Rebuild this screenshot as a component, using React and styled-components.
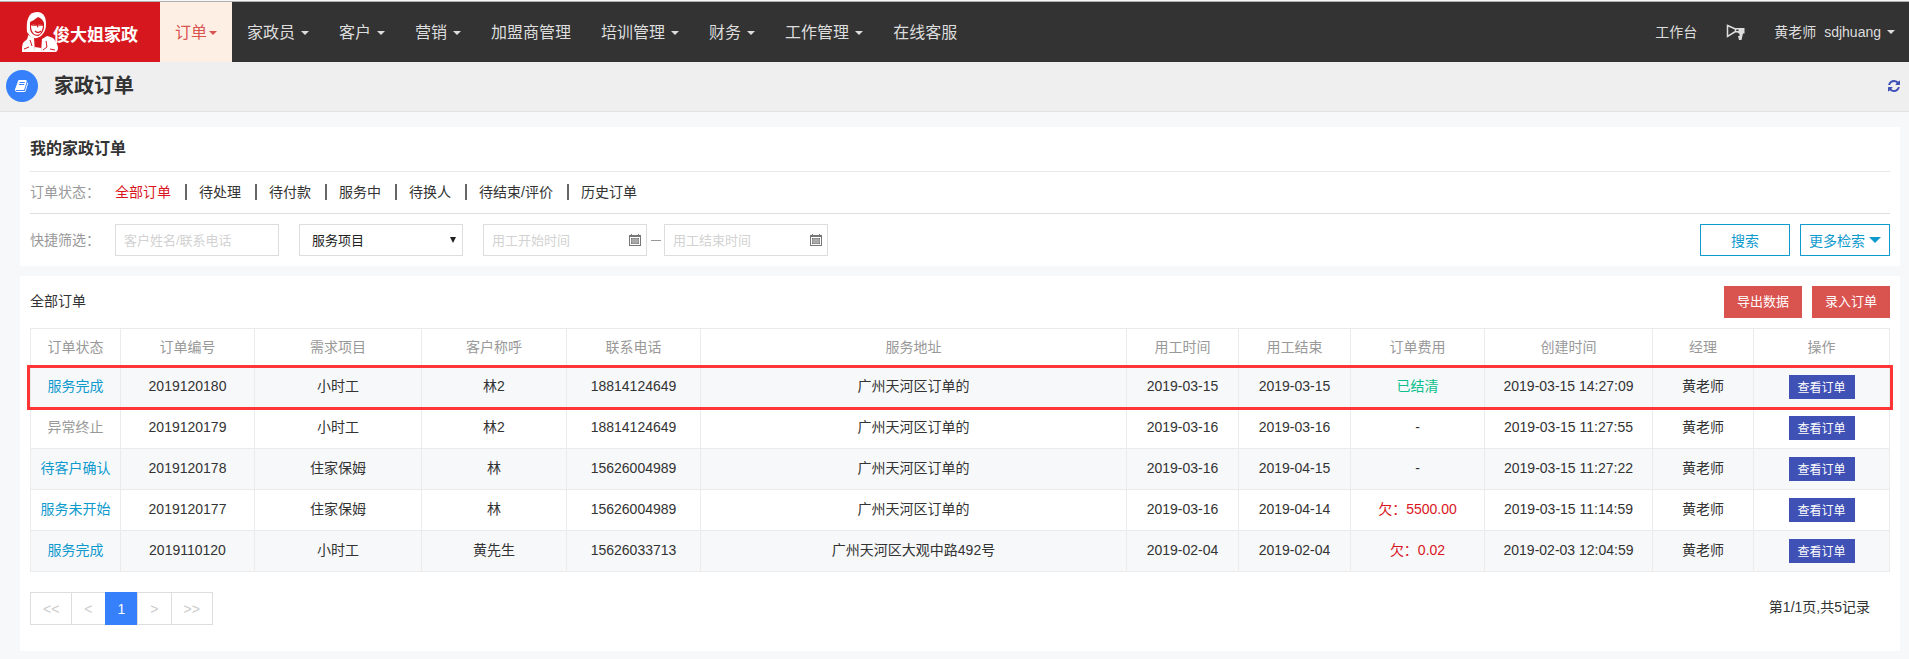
import React from "react"
import styled, { createGlobalStyle, css } from "styled-components"

const GlobalStyle = createGlobalStyle`
  * {
    box-sizing: border-box;
  }

  body {
    margin: 0;
    background: #f7f8fa;
    color: #333;
    font: 14px/20px "Liberation Sans", "Noto Sans CJK SC", sans-serif;
  }

  button, input, select {
    font-family: inherit;
  }

  a {
    color: inherit;
    text-decoration: none;
  }
`

const menu = [
  { label: "订单", caret: true, active: true },
  { label: "家政员", caret: true },
  { label: "客户", caret: true },
  { label: "营销", caret: true },
  { label: "加盟商管理" },
  { label: "培训管理", caret: true },
  { label: "财务", caret: true },
  { label: "工作管理", caret: true },
  { label: "在线客服" },
]

const statuses = ["全部订单", "待处理", "待付款", "服务中", "待换人", "待结束/评价", "历史订单"]

const columns = [
  { label: "订单状态", width: 90 },
  { label: "订单编号", width: 134 },
  { label: "需求项目", width: 167 },
  { label: "客户称呼", width: 145 },
  { label: "联系电话", width: 134 },
  { label: "服务地址" },
  { label: "用工时间", width: 112 },
  { label: "用工结束", width: 112 },
  { label: "订单费用", width: 134 },
  { label: "创建时间", width: 168 },
  { label: "经理", width: 101 },
  { label: "操作", width: 136 },
]

const orders = [
  { status: "服务完成", no: "2019120180", item: "小时工", name: "林2", phone: "18814124649", address: "广州天河区订单的", start: "2019-03-15", end: "2019-03-15", fee: "已结清", tone: "paid", created: "2019-03-15 14:27:09", marked: true },
  { status: "异常终止", no: "2019120179", item: "小时工", name: "林2", phone: "18814124649", address: "广州天河区订单的", start: "2019-03-16", end: "2019-03-16", fee: "-", created: "2019-03-15 11:27:55", closed: true },
  { status: "待客户确认", no: "2019120178", item: "住家保姆", name: "林", phone: "15626004989", address: "广州天河区订单的", start: "2019-03-16", end: "2019-04-15", fee: "-", created: "2019-03-15 11:27:22" },
  { status: "服务未开始", no: "2019120177", item: "住家保姆", name: "林", phone: "15626004989", address: "广州天河区订单的", start: "2019-03-16", end: "2019-04-14", fee: "欠：5500.00", tone: "owed", created: "2019-03-15 11:14:59" },
  { status: "服务完成", no: "2019110120", item: "小时工", name: "黄先生", phone: "15626033713", address: "广州天河区大观中路492号", start: "2019-02-04", end: "2019-02-04", fee: "欠：0.02", tone: "owed", created: "2019-02-03 12:04:59" },
]

const Portrait = () => (
  <svg width="37" height="40" viewBox="0 0 37 40" aria-hidden="true">
    <path fill="#fff" d="M5 20C4 9 6 0 15 0c7 0 9 6 9 12 0 4-1 8-4 11-4 4-9 4-12 1Z" />
    <path fill="#d6181e" d="M8 10c3-1 5-3 8-5 3 1 5 3 6 6v4c0 4-3 8-6 9-5 0-8-4-8-8Z" />
    <path fill="#fff" d="M9 14l2-2 3 1 2 3 1-4 4 1c0 3-1 6-3 9-2 1-4 1-6 0-2-2-3-5-3-8Z" />
    <path fill="none" stroke="#d6181e" strokeWidth="1.4" d="M10 13l4 0M17 13h4M13 19c2 2 4 2 6 0" />
    <path fill="#fff" d="M6 23l6 3 1 14H0c0-5 0-9 3-11 2-1 3-3 3-6ZM20 27l5-3c3 1 5 1 7 3 2 3 4 6 4 9 0 2-1 4-3 4H19Z" />
    <path fill="#fff" d="M13 35l6 1v4h-7Z" />
    <path fill="none" stroke="#d6181e" strokeWidth="1" d="M2 37l5-2M8 28l2 6M24 29l1 6-4 3M28 37l5 1" />
  </svg>
)

const BookIcon = () => (
  <svg width="14" height="14" viewBox="0 0 1792 1792" fill="#fff" aria-hidden="true">
    <path d="M1639 478q40 57 18 129l-275 906q-19 64-76.5 107.5t-122.5 43.5h-923q-77 0-148.5-53.5t-99.5-131.5q-24-67-2-127 0-4 3-27t4-37q1-8-3-21.5t-3-19.5q2-11 8-21t16.5-23.5 16.5-23.5q23-38 45-91.5t30-91.5q3-10 .5-30t-.5-28q3-11 17-28t17-23q21-36 42-92t25-90q1-9-2.500-32t.5-28q4-13 22-30.500t22-22.500q19-26 42.500-84.500t27.500-96.500q1-8-3-25.500t-2-26.500q2-8 9-18t18-23 17-21q8-12 16.500-30.500t15-35 16-36 19.500-32 26.500-23.500 36-11.500 47.500 5.500l-1 3q38-9 51-9h761q74 0 114 56t18 130l-274 906q-36 119-71.500 153.500t-128.500 34.500h-869q-27 0-38 15-11 16-1 43 24 70 144 70h923q29 0 56-15.500t35-41.500l300-987q7-22 5-57 38 15 59 43zm-1064 2q-4 13 2 22.500t20 9.500h608q13 0 25.500-9.500t16.500-22.500l21-64q4-13-2-22.500t-20-9.500h-608q-13 0-25.500 9.500t-16.500 22.500zm-83 256q-4 13 2 22.500t20 9.500h608q13 0 25.500-9.500t16.500-22.500l21-64q4-13-2-22.500t-20-9.500h-608q-13 0-25.500 9.500t-16.500 22.500z" />
  </svg>
)

const RefreshIcon = () => (
  <svg width="14" height="14" viewBox="0 0 1792 1792" fill="#3f51b5" aria-hidden="true">
    <path d="M1639 1056q0 5-1 7-64 268-268 434.5t-478 166.5q-146 0-282.5-55t-243.5-157l-129 129q-19 19-45 19t-45-19-19-45v-448q0-26 19-45t45-19h448q26 0 45 19t19 45-19 45l-137 137q71 66 161 102t187 36q134 0 250-65t186-179q11-17 53-117 8-23 30-23h192q13 0 22.5 9.5t9.5 22.5zm25-800v448q0 26-19 45t-45 19h-448q-26 0-45-19t-19-45 19-45l138-138q-148-137-349-137-134 0-250 65t-186 179q-11 17-53 117-8 23-30 23h-199q-13 0-22.5-9.5t-9.5-22.5v-7q65-268 270-434.5t480-166.5q146 0 284 55.5t245 156.5l130-129q19-19 45-19t45 19 19 45z" />
  </svg>
)

const HornIcon = () => (
  <svg width="19" height="20" viewBox="0 0 19 20" aria-hidden="true">
    <path fill="none" stroke="#ddd" strokeWidth="1.5" d="M1.500 3.500v11L9.500 9.500V7Z" />
    <path fill="#ddd" d="M9 6h9.500v5.500h-1.500l-1.500 6.500h-2.500l-1-4h1.500v-2l-2-1.500H9.500V9h3V7.500H9Z" />
  </svg>
)

const CalendarIcon = () => (
  <svg width="12" height="12" viewBox="0 0 12 12" aria-hidden="true">
    <path fill="#777" d="M0 1h2V0h1v1h6V0h1v1h2v11H0Z" />
    <path fill="#fff" d="M1 3h10v8H1Z" />
    <path fill="#777" d="M2 4h8v6H2Z" />
    <path stroke="#ddd" strokeWidth="0.6" d="M4 4v6M6 4v6M8 4v6M2 6h8M2 8h8" />
  </svg>
)

const App = () => {
  return (<>
            <GlobalStyle />
            <NavBar>
              <Logo href="#">
                <Portrait />
                <LogoText>俊大姐家政</LogoText>
              </Logo>
              {menu.map(({ label, caret, active }) => (
                <NavLink href="#" key={label} $active={active}>
                  {label}
                  {caret && <Caret $spaced={!active} />}
                </NavLink>
              ))}
              <UserNav>
                <UserLink href="#">工作台</UserLink>
                <UserLink href="#" aria-label="消息"><HornIcon /></UserLink>
                <UserLink href="#">
                  <UserName>黄老师</UserName>
                  sdjhuang
                  <Caret $spaced />
                </UserLink>
              </UserNav>
            </NavBar>

            <PageHeader>
              <RoundIcon><BookIcon /></RoundIcon>
              <PageTitle>家政订单</PageTitle>
              <RefreshButton type="button" aria-label="刷新"><RefreshIcon /></RefreshButton>
            </PageHeader>

            <Content>
              <Panel>
                <PanelTitle>我的家政订单</PanelTitle>
                <StatusRow>
                  <RowLabel>订单状态：</RowLabel>
                  <StatusList>
                    {statuses.map((s, i) => (
                      <StatusItem key={s}>
                        <StatusLink href="#" $active={i === 0}>{s}</StatusLink>
                      </StatusItem>
                    ))}
                  </StatusList>
                </StatusRow>
                <FilterRow>
                  <RowLabel>快捷筛选：</RowLabel>
                  <Field>
                    <TextInput aria-label="客户姓名/联系电话" placeholder="客户姓名/联系电话" />
                  </Field>
                  <Field>
                    <Select aria-label="服务项目" defaultValue="">
                      <option value="">服务项目</option>
                      <option>小时工</option>
                      <option>住家保姆</option>
                    </Select>
                    <SelectArrow />
                  </Field>
                  <DateRange>
                    <Field>
                      <TextInput aria-label="用工开始时间" placeholder="用工开始时间" />
                      <CalendarIcon />
                    </Field>
                    <Dash />
                    <Field>
                      <TextInput aria-label="用工结束时间" placeholder="用工结束时间" />
                      <CalendarIcon />
                    </Field>
                  </DateRange>
                  <Actions>
                    <OutlineButton type="button">搜索</OutlineButton>
                    <OutlineButton type="button">更多检索<MoreArrow /></OutlineButton>
                  </Actions>
                </FilterRow>
              </Panel>

              <Panel>
                <ListHeader>
                  <ListTitle>全部订单</ListTitle>
                  <Actions>
                    <RedButton type="button">导出数据</RedButton>
                    <RedButton type="button">录入订单</RedButton>
                  </Actions>
                </ListHeader>
                <Table>
                  <thead>
                    <tr>
                      {columns.map(c => <HeadCell key={c.label} $width={c.width}>{c.label}</HeadCell>)}
                    </tr>
                  </thead>
                  <tbody>
                    {orders.map(o => (
                      <Row key={o.no} $marked={o.marked}>
                        <Cell $tone={o.closed ? "muted" : "link"}>{o.status}</Cell>
                        <Cell>{o.no}</Cell>
                        <Cell>{o.item}</Cell>
                        <Cell>{o.name}</Cell>
                        <Cell>{o.phone}</Cell>
                        <Cell>{o.address}</Cell>
                        <Cell>{o.start}</Cell>
                        <Cell>{o.end}</Cell>
                        <Cell $tone={o.tone}>{o.fee}</Cell>
                        <Cell>{o.created}</Cell>
                        <Cell>黄老师</Cell>
                        <ActionCell><ViewButton type="button">查看订单</ViewButton></ActionCell>
                      </Row>
                    ))}
                  </tbody>
                </Table>
                <ListFooter>
                  <Pager aria-label="分页">
                    <PageButton type="button" disabled>&lt;&lt;</PageButton>
                    <PageButton type="button" disabled>&lt;</PageButton>
                    <PageButton type="button" $current>1</PageButton>
                    <PageButton type="button" disabled>&gt;</PageButton>
                    <PageButton type="button" disabled>&gt;&gt;</PageButton>
                  </Pager>
                  <PageInfo>第1/1页,共5记录</PageInfo>
                </ListFooter>
              </Panel>
            </Content>
          </>)
}

export default App


const tones = {
  link: "#0e9acd",
  muted: "#999",
  paid: "#0cbf8c",
  owed: "#d9161d",
}

const NavBar = styled.nav`
  display: flex;
  height: 61px;
  margin-top: 1px;
  border-top: 1px solid #b0b0b0;
  background: #333;
  color: #ddd;
`

const Logo = styled.a`
  display: flex;
  align-items: center;
  width: 160px;
  padding-left: 22px;
  background: #d6181e;
  color: #fff;
`

const LogoText = styled.span`
  margin: 4px 0 0 -6px;
  font: bold 17px/20px "Noto Sans CJK SC", sans-serif;
  white-space: nowrap;
`

const NavLink = styled.a`
  display: flex;
  align-items: center;
  padding: 2px 15px 0;
  font-size: 16px;
  white-space: nowrap;

  ${p => p.$active && css`
    background: #feefe5;
    color: #d9534f;
  `}
`

const Caret = styled.span`
  margin-left: ${p => p.$spaced ? "6px" : "2px"};
  border: 4px solid transparent;
  border-top-color: currentColor;
  border-bottom: 0;
`

const UserNav = styled.div`
  display: flex;
  gap: 29px;
  margin-left: auto;
  padding-right: 14px;
`

const UserLink = styled.a`
  display: flex;
  align-items: center;
  white-space: nowrap;
`

const UserName = styled.span`
  margin-right: 8px;
`

const PageHeader = styled.header`
  display: flex;
  align-items: center;
  height: 50px;
  padding: 0 8px 2px 6px;
  border-bottom: 1px solid #e2e2e2;
  background: #efefef;
`

const RoundIcon = styled.span`
  display: flex;
  align-items: center;
  justify-content: center;
  width: 32px;
  height: 32px;
  border-radius: 50%;
  background: #3680fc;
`

const PageTitle = styled.h1`
  margin: 0 0 0 16px;
  font-size: 20px;
  line-height: 28px;
`

const RefreshButton = styled.button`
  display: flex;
  margin-left: auto;
  padding: 0;
  border: 0;
  background: none;
`

const Content = styled.main`
  display: flex;
  flex-direction: column;
  gap: 10px;
  padding: 15px 9px 8px 20px;
`

const Panel = styled.section`
  padding: 0 10px 10px;
  background: #fff;
`

const PanelTitle = styled.h2`
  margin: 0;
  border-bottom: 1px solid #e8e8e8;
  font-size: 16px;
  line-height: 44px;
`

const StatusRow = styled.div`
  display: flex;
  align-items: center;
  height: 42px;
  padding-bottom: 2px;
  border-bottom: 1px solid #ddd;
`

const RowLabel = styled.span`
  width: 85px;
  color: #999;
  white-space: nowrap;
`

const StatusList = styled.ul`
  display: flex;
  margin: 0;
  padding: 0;
  list-style: none;
`

const StatusItem = styled.li`
  display: flex;
  align-items: center;

  & + &::before {
    content: "";
    width: 2px;
    height: 16px;
    margin: 0 12px 0 14px;
    background: #666;
  }
`

const StatusLink = styled.a`
  color: ${p => p.$active ? "#d9161d" : "#333"};
`

const FilterRow = styled.div`
  display: flex;
  align-items: center;
  padding-top: 10px;
`

const Field = styled.div`
  position: relative;
  display: flex;
  align-items: center;
  width: 164px;
  height: 32px;
  margin-right: 20px;
  padding-right: 5px;
  border: 1px solid #ddd;
`

const TextInput = styled.input`
  flex: 1;
  min-width: 0;
  padding: 0 8px;
  border: 0;
  background: none;
  outline: 0;
  font-size: 13px;

  &::placeholder {
    color: #d2d2d2;
  }
`

const Select = styled.select`
  flex: 1;
  height: 30px;
  padding: 0 12px;
  border: 0;
  background: none;
  color: #222;
  font-size: 13px;
  appearance: none;
`

const SelectArrow = styled.span`
  position: absolute;
  top: 12px;
  right: 6px;
  border: 3px solid transparent;
  border-top: 6px solid #222;
  border-bottom: 0;
  pointer-events: none;
`

const DateRange = styled.div`
  display: flex;
  align-items: center;

  ${Field} {
    margin-right: 0;
  }
`

const Dash = styled.span`
  width: 10px;
  height: 1px;
  margin: 0 3px 0 4px;
  background: #999;
`

const Actions = styled.div`
  display: flex;
  gap: 10px;
  margin-left: auto;
`

const OutlineButton = styled.button`
  display: flex;
  align-items: center;
  justify-content: center;
  width: 90px;
  height: 32px;
  padding: 0;
  border: 1px solid #0e9acd;
  background: #fff;
  color: #0e9acd;
  font-size: 14px;
`

const MoreArrow = styled.span`
  margin-left: 4px;
  border: 6px solid transparent;
  border-top-color: currentColor;
  border-bottom: 0;
`

const ListHeader = styled.div`
  display: flex;
  align-items: center;
  padding: 10px 0;
`

const ListTitle = styled.h3`
  margin: 0;
  padding-bottom: 2px;
  font-size: 14px;
  font-weight: normal;
`

const RedButton = styled.button`
  width: 78px;
  height: 32px;
  padding: 0 0 4px;
  border: 0;
  background: #d9534f;
  color: #fff;
  font-size: 13px;
`

const Table = styled.table`
  width: 100%;
  border-collapse: collapse;
  table-layout: fixed;
  text-align: center;
`

const HeadCell = styled.th`
  width: ${p => p.$width ? `${p.$width}px` : "auto"};
  height: 38px;
  padding: 0 0 2px;
  border: 1px solid #ebebeb;
  color: #999;
  font-weight: normal;
`

const Cell = styled.td`
  height: 41px;
  padding: 0 0 2px;
  border: 1px solid #ebebeb;
  color: ${p => tones[p.$tone] || "#333"};
`

const ActionCell = styled(Cell)`
  padding: 0;
`

const Row = styled.tr`
  position: relative;

  &:nth-child(odd) {
    background: #f7f8fa;
  }

  ${p => p.$marked && css`
    ${Cell}:first-child::after {
      content: "";
      position: absolute;
      inset: -2px -3px -2px -4px;
      border: 3px solid #ff3636;
      pointer-events: none;
    }
  `}
`

const ViewButton = styled.button`
  width: 66px;
  height: 24px;
  padding: 0 0 2px;
  border: 0;
  background: #3f51b5;
  color: #fff;
  font-size: 12px;
  vertical-align: middle;
`

const ListFooter = styled.div`
  display: flex;
  align-items: center;
  justify-content: space-between;
  padding: 20px 20px 16px 0;
`

const Pager = styled.nav`
  display: flex;
`

const PageButton = styled.button`
  height: 33px;
  margin-right: -1px;
  padding: 0 12px;
  border: 1px solid ${p => p.$current ? "#3680fc" : "#ddd"};
  background: ${p => p.$current ? "#3680fc" : "#fff"};
  color: ${p => p.$current ? "#fff" : "#ccc"};
  font-size: 14px;
`

const PageInfo = styled.span`
  padding-bottom: 4px;
`
